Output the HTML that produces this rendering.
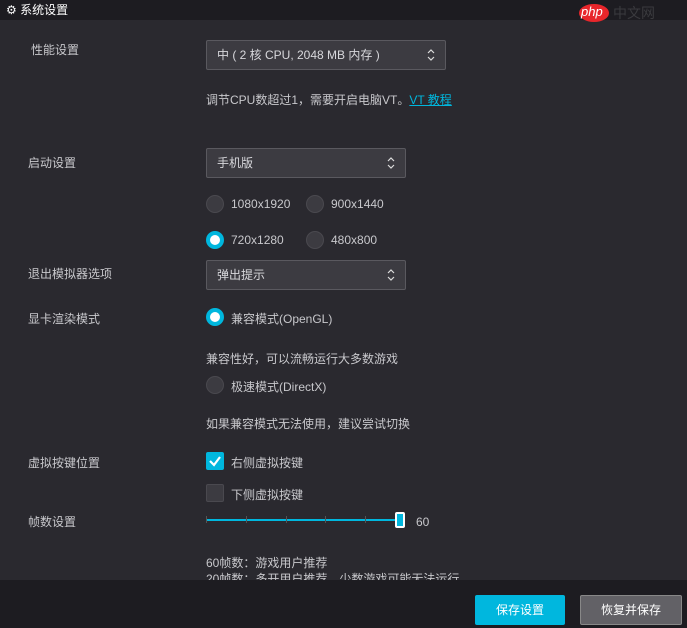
<!DOCTYPE html><html><head><meta charset="utf-8"><style>
body{margin:0;width:687px;height:628px;background:#2a292f;font-family:"Liberation Sans","Noto Sans CJK SC",sans-serif;font-size:12px;color:#c8c8cc;position:relative;overflow:hidden}
.a{position:absolute;white-space:nowrap}
.hd{position:absolute;left:0;top:0;width:687px;height:20px;background:#1d1c21;color:#fff}
.ft{position:absolute;left:0;top:580px;width:687px;height:48px;background:#1d1c21}
.sel{position:absolute;background:#3c3b41;border:1px solid #5a595f;border-radius:2px;box-sizing:border-box;height:30px;line-height:28px;padding-left:10px;color:#d8d8dc}
.sel svg{position:absolute;right:9px;top:6px}
.r{position:absolute;width:18px;height:18px;border-radius:50%;background:#3c3b41;border:1px solid #4a494f;box-sizing:border-box}
.r.on{background:#fff;border:4px solid #00b7de}
.cb{position:absolute;width:18px;height:18px;border-radius:2px;background:#3c3b41;border:1px solid #4a494f;box-sizing:border-box}
</style></head><body>
<div class="hd"><span class="a" style="left:6px;top:1px;font-size:12px">⚙ 系统设置</span>
<div class="a" style="left:579px;top:4px;width:30px;height:18px;border-radius:50%;background:#e8262b"></div>
<span class="a" style="left:581px;top:4px;color:#fff;font-size:13px;font-style:italic">php</span><span class="a" style="left:613px;top:3px;color:#3a3a3e;font-size:14px">中文网</span></div>
<span class="a" style="left:31px;top:41px">性能设置</span>
<div class="sel" style="left:206px;top:40px;width:240px">中 ( 2 核 CPU, 2048 MB 内存 )<svg width="10" height="16"><path d="M2 6 L5 3 L8 6 M2 10 L5 13 L8 10" stroke="#ddd" stroke-width="1.2" fill="none"/></svg></div>
<span class="a" style="left:206px;top:91px">调节CPU数超过1，需要开启电脑VT。<span style="color:#00b7de;text-decoration:underline">VT 教程</span></span>
<span class="a" style="left:28px;top:154px">启动设置</span>
<div class="sel" style="left:206px;top:148px;width:200px">手机版<svg width="10" height="16"><path d="M2 6 L5 3 L8 6 M2 10 L5 13 L8 10" stroke="#ddd" stroke-width="1.2" fill="none"/></svg></div>
<div class="r" style="left:206px;top:195px"></div><span class="a" style="left:231px;top:197px">1080x1920</span>
<div class="r" style="left:306px;top:195px"></div><span class="a" style="left:331px;top:197px">900x1440</span>
<div class="r on" style="left:206px;top:231px"></div><span class="a" style="left:231px;top:233px">720x1280</span>
<div class="r" style="left:306px;top:231px"></div><span class="a" style="left:331px;top:233px">480x800</span>
<span class="a" style="left:28px;top:265px">退出模拟器选项</span>
<div class="sel" style="left:206px;top:260px;width:200px">弹出提示<svg width="10" height="16"><path d="M2 6 L5 3 L8 6 M2 10 L5 13 L8 10" stroke="#ddd" stroke-width="1.2" fill="none"/></svg></div>
<span class="a" style="left:28px;top:310px">显卡渲染模式</span>
<div class="r on" style="left:206px;top:308px"></div><span class="a" style="left:231px;top:310px">兼容模式(OpenGL)</span>
<span class="a" style="left:206px;top:350px">兼容性好，可以流畅运行大多数游戏</span>
<div class="r" style="left:206px;top:376px"></div><span class="a" style="left:231px;top:378px">极速模式(DirectX)</span>
<span class="a" style="left:206px;top:415px">如果兼容模式无法使用，建议尝试切换</span>
<span class="a" style="left:28px;top:454px">虚拟按键位置</span>
<div class="cb" style="left:206px;top:452px;background:#00b7de;border-color:#00b7de"><svg width="16" height="16" style="position:absolute;left:0;top:0"><path d="M3 8 L7 12 L13 4" stroke="#fff" stroke-width="2.2" fill="none"/></svg></div><span class="a" style="left:231px;top:454px">右侧虚拟按键</span>
<div class="cb" style="left:206px;top:484px"></div><span class="a" style="left:231px;top:486px">下侧虚拟按键</span>
<span class="a" style="left:28px;top:513px">帧数设置</span>
<div class="a" style="left:206px;top:519px;width:190px;height:2px;background:#00b7de"></div>
<div class="a" style="left:206px;top:516px;width:1px;height:7px;background:#555"></div>
<div class="a" style="left:246px;top:516px;width:1px;height:7px;background:#555"></div>
<div class="a" style="left:286px;top:516px;width:1px;height:7px;background:#555"></div>
<div class="a" style="left:325px;top:516px;width:1px;height:7px;background:#555"></div>
<div class="a" style="left:365px;top:516px;width:1px;height:7px;background:#555"></div>
<div class="a" style="left:395px;top:512px;width:10px;height:16px;background:#00b7de;border:2px solid #fff;border-radius:2px;box-sizing:border-box"></div>
<span class="a" style="left:416px;top:515px">60</span>
<span class="a" style="left:206px;top:554px">60帧数：游戏用户推荐</span>
<span class="a" style="left:206px;top:570px">20帧数：多开用户推荐，少数游戏可能无法运行</span>
<div class="ft">
<div class="a" style="left:475px;top:15px;width:90px;height:30px;background:#00b7de;border-radius:2px;color:#fff;text-align:center;line-height:30px">保存设置</div>
<div class="a" style="left:580px;top:15px;width:102px;height:30px;background:#626166;border:1px solid #888;box-sizing:border-box;border-radius:2px;color:#fff;text-align:center;line-height:28px">恢复并保存</div>
</div>
</body></html>
